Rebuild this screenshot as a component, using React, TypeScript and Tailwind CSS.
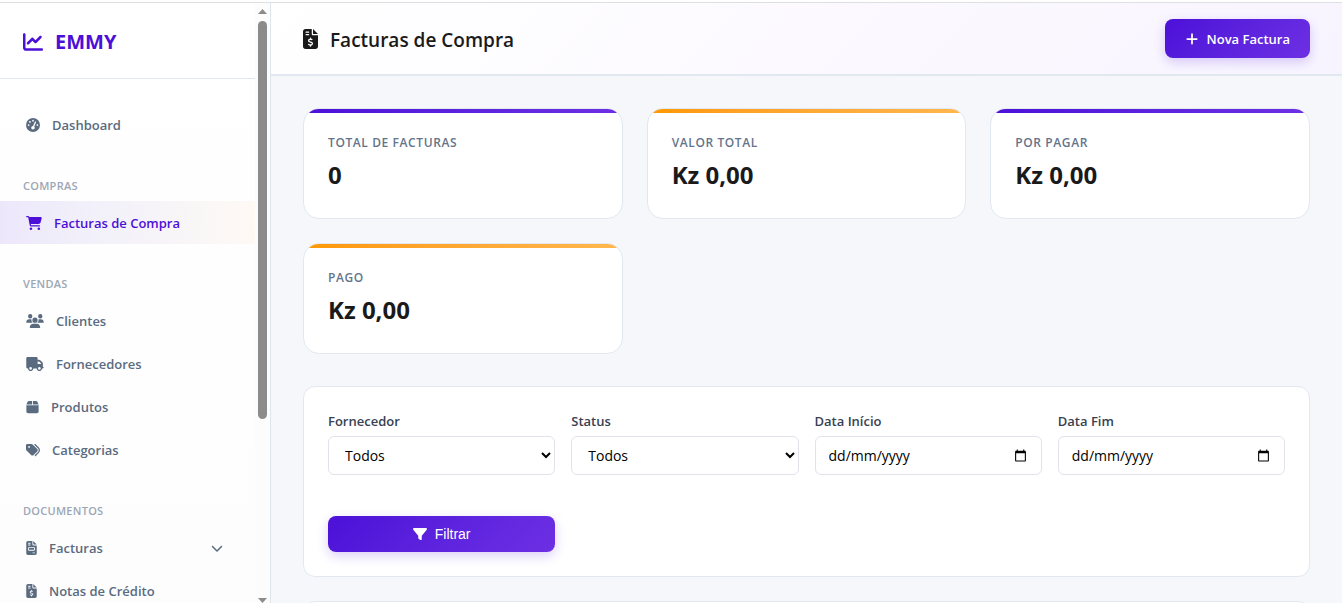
import type { ReactNode } from "react";
import type { IconType } from "react-icons";
import {
  FaBox,
  FaCartShopping,
  FaChartLine,
  FaChevronDown,
  FaFileInvoice,
  FaFileInvoiceDollar,
  FaFilter,
  FaGaugeHigh,
  FaPlus,
  FaTags,
  FaTruck,
  FaUsers,
} from "react-icons/fa6";

type NavItem = { label: string; icon: IconType; iconWidth: string; active?: boolean; expandable?: boolean };
type NavSection = { title?: string; items: NavItem[] };

const sections: NavSection[] = [
  { items: [{ label: "Dashboard", icon: FaGaugeHigh, iconWidth: "w-[14px]" }] },
  {
    title: "Compras",
    items: [{ label: "Facturas de Compra", icon: FaCartShopping, iconWidth: "w-4", active: true }],
  },
  {
    title: "Vendas",
    items: [
      { label: "Clientes", icon: FaUsers, iconWidth: "w-[18px]" },
      { label: "Fornecedores", icon: FaTruck, iconWidth: "w-[18px]" },
      { label: "Produtos", icon: FaBox, iconWidth: "w-[13px]" },
      { label: "Categorias", icon: FaTags, iconWidth: "w-[14px]" },
    ],
  },
  {
    title: "Documentos",
    items: [
      { label: "Facturas", icon: FaFileInvoice, iconWidth: "w-[11px]", expandable: true },
      { label: "Notas de Crédito", icon: FaFileInvoiceDollar, iconWidth: "w-[11px]" },
    ],
  },
];

const stats = [
  { label: "Total de Facturas", value: "0", bar: "from-[#4c0fd8] to-[#6d2fe3]" },
  { label: "Valor Total", value: "Kz 0,00", bar: "from-[#ff9800] to-[#ffb74d]" },
  { label: "Por Pagar", value: "Kz 0,00", bar: "from-[#4c0fd8] to-[#6d2fe3]" },
  { label: "Pago", value: "Kz 0,00", bar: "from-[#ff9800] to-[#ffb74d]" },
];

function NavLink({ item }: { item: NavItem }) {
  const Icon = item.icon;
  const tone = item.active
    ? "bg-linear-to-r from-[#4c0fd8]/10 to-[#ff9800]/5 text-[#4c0fd8]"
    : "text-[#5a6b80]";
  const layout = "flex h-[43px] w-full items-center gap-3 pl-[26px] pr-8 text-left text-[13px] font-semibold";
  const content = (
    <>
      <Icon className={`h-[14px] shrink-0 ${item.iconWidth}`} />
      <span className="pt-[2px]">{item.label}</span>
    </>
  );
  if (item.expandable) {
    return (
      <button type="button" className={`${layout} ${tone}`}>
        {content}
        <FaChevronDown className="ml-auto h-3 w-3" />
      </button>
    );
  }
  return (
    <a href="#" className={`${layout} ${tone}`}>
      {content}
    </a>
  );
}

function Sidebar() {
  return (
    <aside className="flex w-[271px] shrink-0 border-r border-[#dfe5ec] bg-linear-to-b from-white to-[#fdfdfe]">
      <div className="min-w-0 flex-1 overflow-hidden">
        <div className="flex h-[76px] items-center gap-3 border-b border-[#dfe7ee] pt-[2px] pl-[23px] text-xl font-bold text-[#4c0fd8]">
          <FaChartLine className="h-5 w-5" />
          <span>EMMY</span>
        </div>
        <nav className="pt-6">
          {sections.map((section) => (
            <div key={section.items[0].label} className="mb-8">
              {section.title && (
                <h2 className="mb-[7px] pl-[23px] text-[11px] leading-4 font-semibold tracking-wide text-[#9ca6b4] uppercase">
                  {section.title}
                </h2>
              )}
              {section.items.map((item) => (
                <NavLink key={item.label} item={item} />
              ))}
            </div>
          ))}
        </nav>
      </div>
      <div aria-hidden="true" className="flex w-[15px] flex-col items-center bg-[#fcfcfc] pt-[6px]">
        <svg width="9" height="5" viewBox="0 0 9 5" fill="#8b8b8b">
          <path d="M4.500 0 9 5H0z" />
        </svg>
        <div className="mt-[7px] flex w-[9px] flex-1 flex-col">
          <div className="h-[69%] rounded-full bg-[#8b8b8b]" />
        </div>
        <svg width="9" height="5" viewBox="0 0 9 5" fill="#8b8b8b">
          <path d="M0 0h9L4.500 5z" />
        </svg>
      </div>
    </aside>
  );
}

function StatCard({ label, value, bar }: { label: string; value: string; bar: string }) {
  return (
    <article className="h-[111px] overflow-hidden rounded-2xl border border-[#e2e8f0] bg-white">
      <div className={`h-1 bg-linear-to-r ${bar}`} />
      <div className="px-6 pt-5">
        <h2 className="text-xs leading-5 font-semibold tracking-wider text-[#64748b] uppercase">{label}</h2>
        <p className="mt-1 text-2xl leading-9 font-bold text-[#1a1a1a]">{value}</p>
      </div>
    </article>
  );
}

function Field({ id, label, children }: { id: string; label: string; children: ReactNode }) {
  return (
    <div className="flex flex-col gap-1">
      <label htmlFor={id} className="text-[13px] leading-[21px] font-semibold text-[#374151]">
        {label}
      </label>
      {children}
    </div>
  );
}

const control = "h-[39px] w-full rounded-md border border-[#e0e3ea] bg-white px-3 text-sm text-black";

function DateInput({ id }: { id: string }) {
  return (
    <div className={`${control} flex items-center`}>
      <input
        id={id}
        type="text"
        inputMode="numeric"
        placeholder="dd/mm/yyyy"
        className="min-w-0 flex-1 bg-transparent pl-px outline-none placeholder:text-black"
      />
      <button type="button" aria-label="Abrir calendário" className="mr-[2px]">
        <svg width="13" height="13" viewBox="0 0 24 24" fill="currentColor" aria-hidden="true">
          <path d="M20 3h-1V1h-2v2H7V1H5v2H4c-1.100 0-2 .9-2 2v16c0 1.100.9 2 2 2h16c1.100 0 2-.9 2-2V5c0-1.100-.9-2-2-2zm0 18H4V8h16v13z" />
        </svg>
      </button>
    </div>
  );
}

const primary =
  "flex items-center justify-center gap-2 rounded-lg bg-linear-135 from-[#4c0fd8] to-[#6d2fe3] text-white shadow-[0_4px_12px_rgba(76,15,216,0.2)]";

export default function App() {
  return (
    <div className="flex h-screen flex-col overflow-hidden bg-white pt-[2px] pr-px font-['Open_Sans','Noto_Sans',sans-serif]">
      <div className="h-px shrink-0 bg-[#dedfe1]" />
      <div className="flex min-h-0 flex-1">
        <Sidebar />
        <div className="flex min-w-0 flex-1 flex-col overflow-hidden bg-[#f5f7fb]">
          <header className="flex h-[73px] shrink-0 items-center justify-between border-b-2 border-[#e2e8f0] bg-linear-135 from-white to-[#f8f4ff] px-8">
            <h1 className="flex items-center gap-3 text-[19px] leading-7 font-semibold text-[#1a1a1a]">
              <FaFileInvoiceDollar className="h-5 w-[15px]" />
              <span className="pt-[2px]">Facturas de Compra</span>
            </h1>
            <button type="button" className={`${primary} h-[39px] px-5 text-[13px] font-semibold`}>
              <FaPlus className="h-[14px] w-[14px]" />
              <span className="pt-[2px]">Nova Factura</span>
            </button>
          </header>

          <main className="min-h-0 flex-1 overflow-hidden px-8 pt-8">
            <section className="grid grid-cols-3 gap-6">
              {stats.map((stat) => (
                <StatCard key={stat.label} {...stat} />
              ))}
            </section>

            <form className="mt-8 grid grid-cols-4 gap-4 rounded-xl border border-[#e2e8f0] bg-white p-6">
              <Field id="fornecedor" label="Fornecedor">
                <select id="fornecedor" className={control}>
                  <option>Todos</option>
                </select>
              </Field>
              <Field id="status" label="Status">
                <select id="status" className={control}>
                  <option>Todos</option>
                </select>
              </Field>
              <Field id="inicio" label="Data Início">
                <DateInput id="inicio" />
              </Field>
              <Field id="fim" label="Data Fim">
                <DateInput id="fim" />
              </Field>
              <div className="pt-[25px]">
                <button
                  type="button"
                  className={`${primary} h-9 w-full font-['Liberation_Sans',Arial,sans-serif] text-sm`}
                >
                  <FaFilter className="h-[14px] w-[14px]" />
                  Filtrar
                </button>
              </div>
            </form>

            <section className="mt-6 h-40 rounded-xl border border-[#e2e8f0] bg-white" />
          </main>
        </div>
      </div>
    </div>
  );
}
